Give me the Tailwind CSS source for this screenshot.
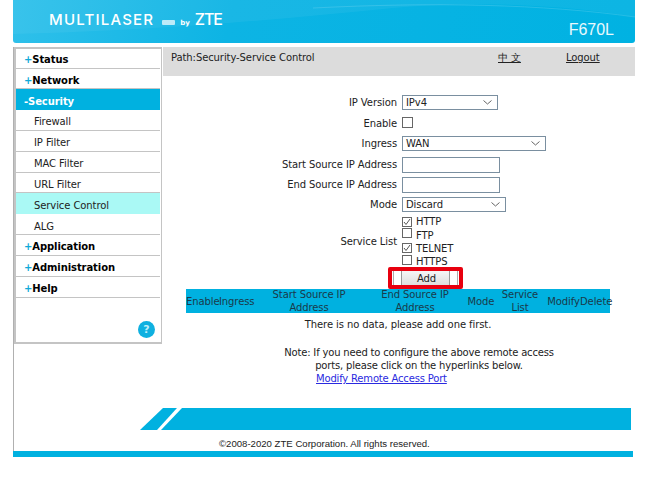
<!DOCTYPE html>
<html lang="en">
<head>
  <meta charset="UTF-8" />
  <title>F670L</title>
  <script src="https://cdn.jsdelivr.net/npm/@tailwindcss/browser@4"></script>
</head>
<body class="bg-white h-[479px] overflow-hidden font-['DejaVu_Sans',sans-serif] text-[10px] leading-[12px] tracking-[-0.09px] text-[#222]">
  <div class="w-[622px] ml-[13px]">
    <!-- Header -->
    <header class="relative h-[43px] rounded-b-[3px] overflow-hidden bg-[linear-gradient(100deg,#2fc0ea_0%,#0db4e4_35%,#00b2e2_100%)]">
      <svg class="absolute inset-0" width="622" height="43" viewBox="0 0 622 43" fill="none">
        <path d="M0 34 C150 30 260 20 380 8 C470 0 560 6 622 17 L622 0 L0 0 Z" fill="#ffffff" fill-opacity="0.05"/>
        <path d="M300 8 C420 2 530 4 622 17" stroke="#ffffff" stroke-opacity="0.14"/>
      </svg>
      <div class="relative flex items-center justify-between h-full pl-[36px] pr-[21px]">
        <div class="flex items-baseline mt-[2px] text-white">
          <span class="font-['Inter',sans-serif] font-medium text-[15px] tracking-[1.2px]">MULTILASER</span>
          <span class="w-[13px] h-[5px] ml-[8px] mb-[7px] bg-white/70 rounded-[1px]"></span>
          <span class="ml-[5px] font-bold text-[7px]">by</span>
          <span class="ml-[5px] font-['Inter',sans-serif] font-medium text-[16px] tracking-[-1px]">ZTE</span>
        </div>
        <span class="mt-[16px] font-['Liberation_Sans',sans-serif] text-[16px] tracking-normal text-[#e8f9fd]">F670L</span>
      </div>
    </header>

    <!-- Grey rule down the left side, from the menu to the bottom bar -->
    <div class="mt-[4px] border-l border-[#b0b0b0]">
      <div class="flex h-[361px]">
        <!-- Side menu -->
        <nav class="w-[148px] h-[297px] border-2 border-[#c4c4c4] border-r-[1px] pr-[1px] flex flex-col">
          <a class="h-[20px] flex items-center pt-[2px] pl-[8px] border-b-[1px] border-[#c4c4c4] font-bold text-black"><span class="text-[#0fa9d8]">+</span>Status</a>
          <a class="h-[20px] flex items-center pt-[4px] pl-[8px] border-b-[1px] border-[#c4c4c4] font-bold text-black"><span class="text-[#0fa9d8]">+</span>Network</a>
          <a class="h-[21px] flex items-center pt-[5px] pl-[8px] bg-[#00b1e0] font-bold text-white">-Security</a>
          <a class="h-[21px] flex items-center pt-[4px] pl-[18px] border-b-[1px] border-[#c4c4c4]">Firewall</a>
          <a class="h-[21px] flex items-center pt-[4px] pl-[18px] border-b-[1px] border-[#c4c4c4]">IP Filter</a>
          <a class="h-[21px] flex items-center pt-[4px] pl-[18px] border-b-[1px] border-[#c4c4c4]">MAC Filter</a>
          <a class="h-[20px] flex items-center pt-[4px] pl-[18px] border-b-[1px] border-[#c4c4c4]">URL Filter</a>
          <a class="h-[21px] flex items-center pt-[5px] pl-[18px] bg-[#aaf9f5]">Service Control</a>
          <a class="h-[21px] flex items-center pt-[6px] pl-[18px] border-b-[1px] border-[#c4c4c4]">ALG</a>
          <a class="h-[21px] flex items-center pt-[4px] pl-[8px] border-b-[1px] border-[#c4c4c4] font-bold text-black"><span class="text-[#0fa9d8]">+</span>Application</a>
          <a class="h-[21px] flex items-center pt-[4px] pl-[8px] border-b-[1px] border-[#c4c4c4] font-bold text-black"><span class="text-[#0fa9d8]">+</span>Administration</a>
          <a class="h-[21px] flex items-center pt-[4px] pl-[8px] border-b-[1px] border-[#c4c4c4] font-bold text-black"><span class="text-[#0fa9d8]">+</span>Help</a>
          <div class="flex-1 flex items-end justify-end pr-[5px] pb-[4px]">
            <span class="w-[17px] h-[17px] rounded-full bg-[#0fb0e0] text-[#bfeef9] text-[11px] font-bold flex items-center justify-center">?</span>
          </div>
        </nav>

        <!-- Content -->
        <main class="w-[472px] ml-[1px]">
          <div class="h-[29px] bg-[#dcdcdc] flex pt-[5px] pl-[8px]">
            <span class="w-[327px]">Path:Security-Service Control</span>
            <a class="w-[68px] underline">中 文</a>
            <a class="underline">Logout</a>
          </div>

          <form class="grid grid-cols-[234px_1fr] gap-x-[5px] mt-[19px] items-center">
            <label class="text-right h-[21px] leading-[16px]">IP Version</label>
            <div class="h-[21px]"><div class="w-[96px] h-[15px] border border-[#7a8fa0] flex items-center justify-between pl-[3px] pr-[5px]">IPv4<svg width="9" height="5" viewBox="0 0 9 5" fill="none"><path d="M0.5 0.5 L4.5 4 L8.5 0.5" stroke="#666"/></svg></div></div>
            <label class="text-right h-[20px] leading-[16px]">Enable</label>
            <div class="h-[20px]"><span class="block mt-[1px] w-[11px] h-[11px] border border-[#666]"></span></div>
            <label class="text-right h-[21px] leading-[16px]">Ingress</label>
            <div class="h-[21px]"><div class="w-[144px] h-[15px] border border-[#7a8fa0] flex items-center justify-between pl-[3px] pr-[5px]">WAN<svg width="9" height="5" viewBox="0 0 9 5" fill="none"><path d="M0.5 0.5 L4.5 4 L8.5 0.5" stroke="#666"/></svg></div></div>
            <label class="text-right h-[20px] leading-[16px]">Start Source IP Address</label>
            <div class="h-[20px]"><div class="w-[98px] h-[16px] border border-[#7a8fa0]"></div></div>
            <label class="text-right h-[20px] leading-[16px]">End Source IP Address</label>
            <div class="h-[20px]"><div class="w-[98px] h-[16px] border border-[#7a8fa0]"></div></div>
            <label class="text-right h-[18px] leading-[16px]">Mode</label>
            <div class="h-[18px]"><div class="w-[104px] h-[15px] border border-[#7a8fa0] flex items-center justify-between pl-[3px] pr-[5px]">Discard<svg width="9" height="5" viewBox="0 0 9 5" fill="none"><path d="M0.5 0.5 L4.5 4 L8.5 0.5" stroke="#666"/></svg></div></div>
            <label class="text-right">Service List</label>
            <div class="flex flex-col h-[53px]">
              <div class="h-[13px] flex items-center gap-[4px]"><span class="w-[10px] h-[10px] border border-[#666] flex items-center justify-center"><svg width="8" height="8" viewBox="0 0 8 8" fill="none"><path d="M1 4 L3 6.5 L7 1" stroke="#555"/></svg></span>HTTP</div>
              <div class="h-[14px] flex items-center gap-[4px] pt-[1px]"><span class="w-[10px] h-[10px] mb-[5px] border border-[#666]"></span>FTP</div>
              <div class="h-[13px] flex items-center gap-[4px]"><span class="w-[10px] h-[10px] mb-[2px] border border-[#666] flex items-center justify-center"><svg width="8" height="8" viewBox="0 0 8 8" fill="none"><path d="M1 4 L3 6.5 L7 1" stroke="#555"/></svg></span>TELNET</div>
              <div class="h-[13px] flex items-center gap-[4px]"><span class="w-[10px] h-[10px] mb-[3px] border border-[#666]"></span>HTTPS</div>
            </div>
          </form>

          <!-- Add button inside the red marker -->
          <div class="w-[75px] h-[22px] ml-[225px] -mt-[1px] border-[4px] border-[#e8000f] rounded-[2px] flex justify-between items-stretch px-[1px] bg-white">
            <span class="w-[1px] bg-[#aaa]"></span>
            <button type="button" class="w-[49px] pl-[2px] pt-[1px] bg-[linear-gradient(#f6f6f6,#dedede)] border-x border-[#999] text-[#222]">Add</button>
            <span class="w-[1px] bg-[#aaa]"></span>
          </div>

          <!-- Table -->
          <div class="w-[424px] ml-[23px] h-[24px] bg-[#00b1e0] flex items-center text-center leading-[13px] text-[#1a3a4a]">
            <span class="w-[33px] flex-none">Enable</span>
            <span class="w-[35px] flex-none">Ingress</span>
            <span class="w-[110px] flex-none">Start Source IP Address</span>
            <span class="w-[102px] flex-none">End Source IP Address</span>
            <span class="w-[30px] flex-none">Mode</span>
            <span class="w-[48px] flex-none">Service List</span>
            <span class="w-[33px] flex-none ml-[3px]">Modify</span>
            <span class="w-[30px] flex-none">Delete</span>
          </div>
          <p class="w-[424px] ml-[23px] text-center mt-[6px]">There is no data, please add one first.</p>

          <div class="mt-[15px] ml-[116px] w-[280px] leading-[13px] tracking-[-0.18px]">
            <p class="text-center">Note: If you need to configure the above remote access<br />ports, please click on the hyperlinks below.</p>
            <a class="block ml-[37px] text-[#2a2ae0] underline">Modify Remote Access Port</a>
          </div>
        </main>
      </div>

      <!-- Footer -->
      <div class="relative h-[22px] ml-[126px] w-[491px] overflow-hidden">
        <div class="absolute inset-0 bg-[#00b1e0] [clip-path:polygon(23px_0,100%_0,100%_100%,0_100%)]"></div>
        <div class="absolute top-0 left-0 w-[50px] h-[22px] bg-white [clip-path:polygon(17px_100%,21px_100%,42px_0,37px_0)]"></div>
      </div>
      <p class="pt-[8px] pb-[1px] ml-[205px] font-['Liberation_Sans',sans-serif] text-[9.6px] leading-[12px] tracking-normal">©2008-2020 ZTE Corporation. All rights reserved.</p>
    </div>
    <div class="h-[6px] w-[620px] bg-[#00b1e0]"></div>
  </div>
</body>
</html>
